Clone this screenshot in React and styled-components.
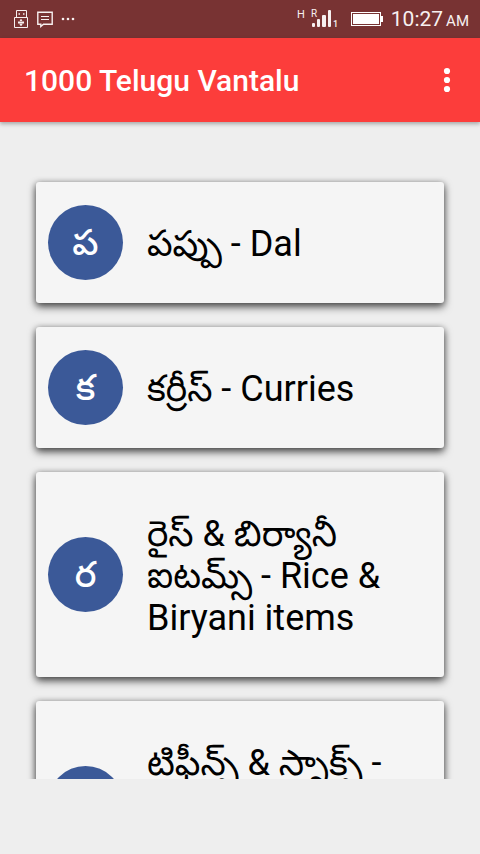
import React from "react";
import styled, { createGlobalStyle } from "styled-components";

const GlobalStyle = createGlobalStyle`
  * {
    box-sizing: border-box;
  }

  body {
    margin: 0;
    background: #eeeeee;
    font-family: Roboto, "Noto Sans Telugu", "Noto Sans", sans-serif;
  }
`;

const Screen = styled.div`
  display: flex;
  flex-direction: column;
  height: 100vh;
`;

const StatusBar = styled.div`
  display: flex;
  justify-content: space-between;
  align-items: center;
  flex-shrink: 0;
  height: 38px;
  padding: 0 11px 0 13px;
  background: #783333;
  color: #f7f0f0;
`;

const StatusGroup = styled.div`
  display: flex;
  align-items: center;
  gap: ${(props) => props.$gap};
`;

const Clock = styled.span`
  padding-top: 2px;
  font-size: 21px;
  line-height: 36px;
`;

const Meridiem = styled.span`
  font-size: 15px;
  margin-left: 3px;
`;

const Toolbar = styled.header`
  position: relative;
  z-index: 1;
  display: flex;
  justify-content: space-between;
  align-items: center;
  flex-shrink: 0;
  height: 84px;
  padding: 0 18px 0 24px;
  background: #fc3d3b;
  box-shadow: 0 2px 4px rgba(0, 0, 0, 0.3);
`;

const AppTitle = styled.h1`
  margin: 0;
  color: #ffffff;
  font-size: 30px;
  font-weight: 500;
`;

const MenuButton = styled.button`
  display: flex;
  justify-content: center;
  padding: 0;
  width: 30px;
  border: none;
  background: none;
  cursor: pointer;
`;

const CategoryList = styled.ul`
  flex: 1;
  display: flex;
  flex-direction: column;
  gap: 24px;
  min-height: 0;
  margin: 0;
  padding: 60px 36px 24px;
  overflow-y: auto;
  scrollbar-width: none;
  list-style: none;
`;

const Card = styled.a`
  display: flex;
  align-items: center;
  gap: 24px;
  min-height: 121px;
  padding: 0 12px;
  border-radius: 3px;
  background: #f5f5f5;
  box-shadow: 0 4px 9px rgba(0, 0, 0, 0.6), 0 1px 6px rgba(0, 0, 0, 0.35);
  color: #000000;
  text-decoration: none;
`;

const Letter = styled.span`
  display: flex;
  justify-content: center;
  align-items: center;
  flex-shrink: 0;
  width: 75px;
  height: 75px;
  border-radius: 50%;
  background: #3b5998;
  color: #ffffff;
  font-size: 36px;
  font-weight: 500;
  line-height: 42px;
`;

const CardTitle = styled.span`
  padding: 41px 0 38px;
  font-size: 36px;
  line-height: 42px;
`;

const BannerSlot = styled.div`
  flex-shrink: 0;
  height: 75px;
`;

const categories = [
  { id: "dal", letter: "ప", title: "పప్పు - Dal" },
  { id: "curries", letter: "క", title: "కర్రీస్ - Curries" },
  { id: "rice", letter: "ర", title: "రైస్ & బిర్యానీ ఐటమ్స్ - Rice & Biryani items" },
  { id: "snacks", letter: "ట", title: "టిఫీన్స్ & స్నాక్స్ - Tiffins & Snacks items" },
];

const UsbIcon = () => (
  <svg width="16" height="20" viewBox="0 0 16 20" fill="none" stroke="currentColor">
    <path d="M3.5 8V1.5h10V8M1.5 8.5h13v10h-13z" />
    <path d="M5.5 5h1.5M10 5h1.5" strokeWidth="1.5" />
    <path d="M8 10v7M5.5 13.5h5" strokeWidth="1" />
    <path d="M8 10.5l1.5 1.5h-3zM8 16.8l-2-2h4z" fill="currentColor" stroke="none" />
    <rect x="5" y="12.5" width="2" height="2" fill="currentColor" stroke="none" />
    <rect x="9" y="12.5" width="2" height="2" fill="currentColor" stroke="none" />
  </svg>
);

const MessageIcon = () => (
  <svg width="16" height="17" viewBox="0 0 16 17" fill="none" stroke="currentColor">
    <path d="M.8 1.2h14.4v12H6.5L3.8 15.5v-2.3h-3z" strokeWidth="1.4" />
    <path d="M4 5.5h8M4 8.5h8" strokeWidth="1.2" />
  </svg>
);

const MoreIcon = () => (
  <svg width="14" height="4" viewBox="0 0 14 4" fill="currentColor">
    <circle cx="2" cy="2" r="1.3" />
    <circle cx="7" cy="2" r="1.3" />
    <circle cx="12" cy="2" r="1.3" />
  </svg>
);

const SignalIcon = () => (
  <svg width="42" height="20" viewBox="0 0 42 20" fill="currentColor">
    <text x="0" y="9" fontSize="11">
      H
    </text>
    <text x="14" y="8" fontSize="10">
      R
    </text>
    <rect x="15" y="14" width="3" height="4" rx="1" />
    <rect x="20" y="10" width="3" height="8" rx="1" />
    <rect x="25" y="6" width="4" height="12" rx="1" />
    <rect x="31" y="1" width="3" height="17" rx="1" />
    <text x="36" y="18" fontSize="9" fontWeight="500">
      1
    </text>
  </svg>
);

const BatteryIcon = () => (
  <svg width="32" height="14" viewBox="0 0 32 14" fill="#ffffff">
    <rect x=".5" y=".5" width="29" height="13" fill="none" stroke="#ffffff" />
    <rect x="2" y="2" width="26" height="10" />
    <rect x="30" y="4" width="2" height="6" />
  </svg>
);

const OverflowIcon = () => (
  <svg width="8" height="26" viewBox="0 0 8 26" fill="#ffffff">
    <circle cx="4" cy="4" r="3.1" />
    <circle cx="4" cy="13" r="3.1" />
    <circle cx="4" cy="22" r="3.1" />
  </svg>
);

const CategoryCard = ({ category }) => {
  return (
    <li>
      <Card href={`#${category.id}`}>
        <Letter>{category.letter}</Letter>
        <CardTitle>{category.title}</CardTitle>
      </Card>
    </li>
  );
};

const App = () => {
  return (
    <Screen>
      <GlobalStyle />
      <StatusBar>
        <StatusGroup $gap="8px">
          <UsbIcon />
          <MessageIcon />
          <MoreIcon />
        </StatusGroup>
        <StatusGroup $gap="8px">
          <StatusGroup $gap="12px">
            <SignalIcon />
            <BatteryIcon />
          </StatusGroup>
          <Clock>
            10:27
            <Meridiem>AM</Meridiem>
          </Clock>
        </StatusGroup>
      </StatusBar>

      <Toolbar>
        <AppTitle>1000 Telugu Vantalu</AppTitle>
        <MenuButton type="button" aria-label="More options">
          <OverflowIcon />
        </MenuButton>
      </Toolbar>

      <CategoryList>
        {categories.map((category) => (
          <CategoryCard key={category.id} category={category} />
        ))}
      </CategoryList>

      {/* space kept for the banner */}
      <BannerSlot />
    </Screen>
  );
};

export default App;
